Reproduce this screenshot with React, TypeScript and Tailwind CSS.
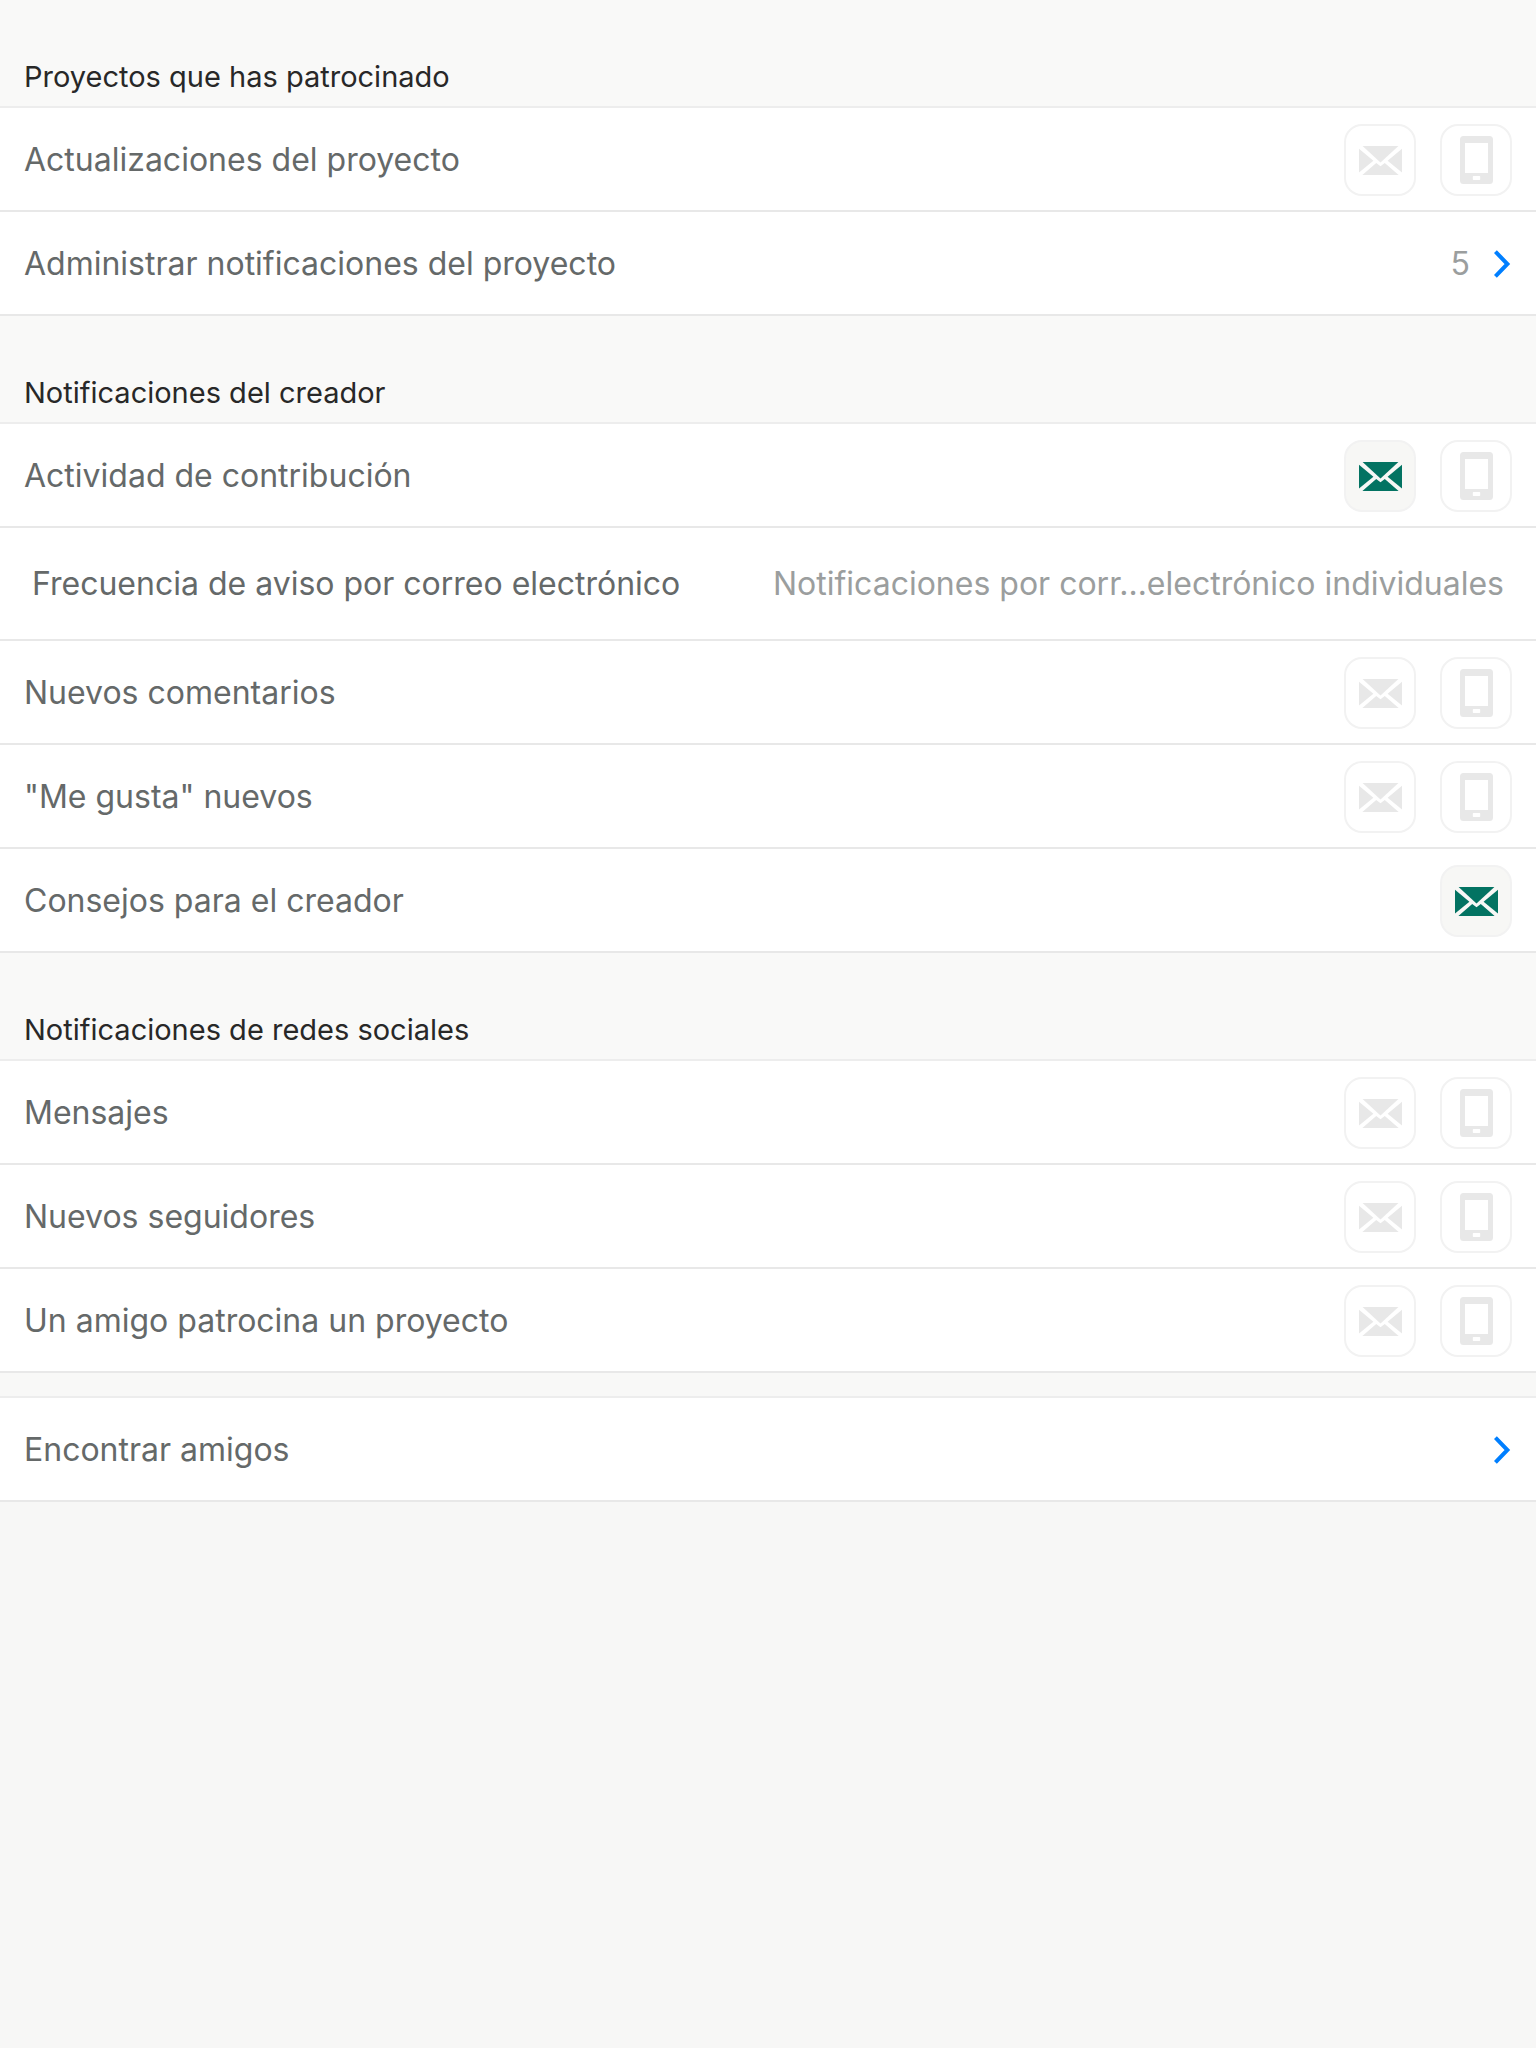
import React, { useState } from "react";

type Channel = { kind: "mail" | "phone"; on: boolean };

function MailIcon() {
  return (
    <svg width="44" height="30" viewBox="-1 -1 44 30" fill="currentColor" aria-hidden="true">
      <path d="M3.6 0H39.4L21.5 16.4Z" />
      <path d="M0 2.8L14.4 14.8L0 26.4Z" />
      <path d="M43 2.8L28.6 14.8L43 26.4Z" />
      <path d="M3.4 29L17.2 17L21.5 20.2L25.8 17L39.6 29Z" />
    </svg>
  );
}

function PhoneIcon() {
  return (
    <svg width="34" height="48" viewBox="-1 0 34 48" fill="currentColor" aria-hidden="true">
      <path
        fillRule="evenodd"
        d="M3.5 0H29.5A3.5 3.5 0 0 1 33 3.5V44.5A3.5 3.5 0 0 1 29.5 48H3.5A3.5 3.5 0 0 1 0 44.5V3.5A3.5 3.5 0 0 1 3.5 0ZM5 7V37H28V7ZM13.6 40A0.8 0.8 0 0 0 12.8 40.8V43.2A0.8 0.8 0 0 0 13.6 44H19.4A0.8 0.8 0 0 0 20.2 43.2V40.8A0.8 0.8 0 0 0 19.4 40Z"
      />
    </svg>
  );
}

function Chevron() {
  return (
    <svg width="18" height="28" viewBox="0 0 18 28" fill="none" aria-hidden="true" className="text-[#007fff]">
      <path d="M1.4 1.6L13.4 14L1.4 26.4" stroke="currentColor" strokeWidth="4" />
    </svg>
  );
}

function Toggle({ channel, label }: { channel: Channel; label: string }) {
  const [on, setOn] = useState(channel.on);
  const name = channel.kind === "mail" ? "correo electrónico" : "móvil";
  return (
    <button
      type="button"
      aria-pressed={on}
      aria-label={`${label}: ${name}`}
      onClick={() => setOn(!on)}
      className={
        on
          ? "flex size-18 items-center justify-center rounded-[18px] border-2 border-[#f2f2f2] bg-[#f7f7f5] text-[#037362]"
          : "flex size-18 items-center justify-center rounded-[18px] border-2 border-[#f2f2f2] bg-white text-[#e8e8e8]"
      }
    >
      {channel.kind === "mail" ? <MailIcon /> : <PhoneIcon />}
    </button>
  );
}

function Header({ children }: { children: React.ReactNode }) {
  return (
    <h2 className="border-b-2 border-[#ededed] bg-[#f9f9f8] px-6 pt-[57px] pb-[9px] text-[29px] leading-10 text-[#282828]">
      {children}
    </h2>
  );
}

function ToggleRow({ label, channels }: { label: string; channels: Channel[] }) {
  return (
    <div className="flex items-center justify-between border-b-2 border-[#e8e8e8] bg-white px-6 pt-4 pb-3.5">
      <span>{label}</span>
      <div className="flex gap-6">
        {channels.map((c) => (
          <Toggle key={c.kind} channel={c} label={label} />
        ))}
      </div>
    </div>
  );
}

function LinkRow({ label, count }: { label: string; count?: number }) {
  return (
    <a href="#" className="flex items-center justify-between border-b-2 border-[#e8e8e8] bg-white px-6 pt-8 pb-[30px]">
      <span>{label}</span>
      <span className="flex items-center gap-6 text-[#9b9e9e]">
        {count}
        <Chevron />
      </span>
    </a>
  );
}

const off: Channel[] = [
  { kind: "mail", on: false },
  { kind: "phone", on: false },
];

export default function App() {
  return (
    <main className="min-h-screen bg-[#f7f7f6] font-['Inter',sans-serif] text-[32px] leading-10 text-[#656969]">
      <section>
        <Header>Proyectos que has patrocinado</Header>
        <ToggleRow label="Actualizaciones del proyecto" channels={off} />
        <LinkRow label="Administrar notificaciones del proyecto" count={5} />
      </section>
      <section>
        <Header>Notificaciones del creador</Header>
        <ToggleRow
          label="Actividad de contribución"
          channels={[
            { kind: "mail", on: true },
            { kind: "phone", on: false },
          ]}
        />
        <button
          type="button"
          className="flex w-full items-center justify-between border-b-2 border-[#e8e8e8] bg-white px-8 pt-9 pb-[35px] text-left"
        >
          <span>Frecuencia de aviso por correo electrónico</span>
          <span className="text-[#9b9e9e]">Notificaciones por corr…electrónico individuales</span>
        </button>
        <ToggleRow label="Nuevos comentarios" channels={off} />
        <ToggleRow label={'"Me gusta" nuevos'} channels={off} />
        <ToggleRow label="Consejos para el creador" channels={[{ kind: "mail", on: true }]} />
      </section>
      <section>
        <Header>Notificaciones de redes sociales</Header>
        <ToggleRow label="Mensajes" channels={off} />
        <ToggleRow label="Nuevos seguidores" channels={off} />
        <ToggleRow label="Un amigo patrocina un proyecto" channels={off} />
      </section>
      <section>
        <div className="h-[25px] border-b-2 border-[#ededed] bg-[#f8f8f7]" />
        <LinkRow label="Encontrar amigos" />
      </section>
    </main>
  );
}
